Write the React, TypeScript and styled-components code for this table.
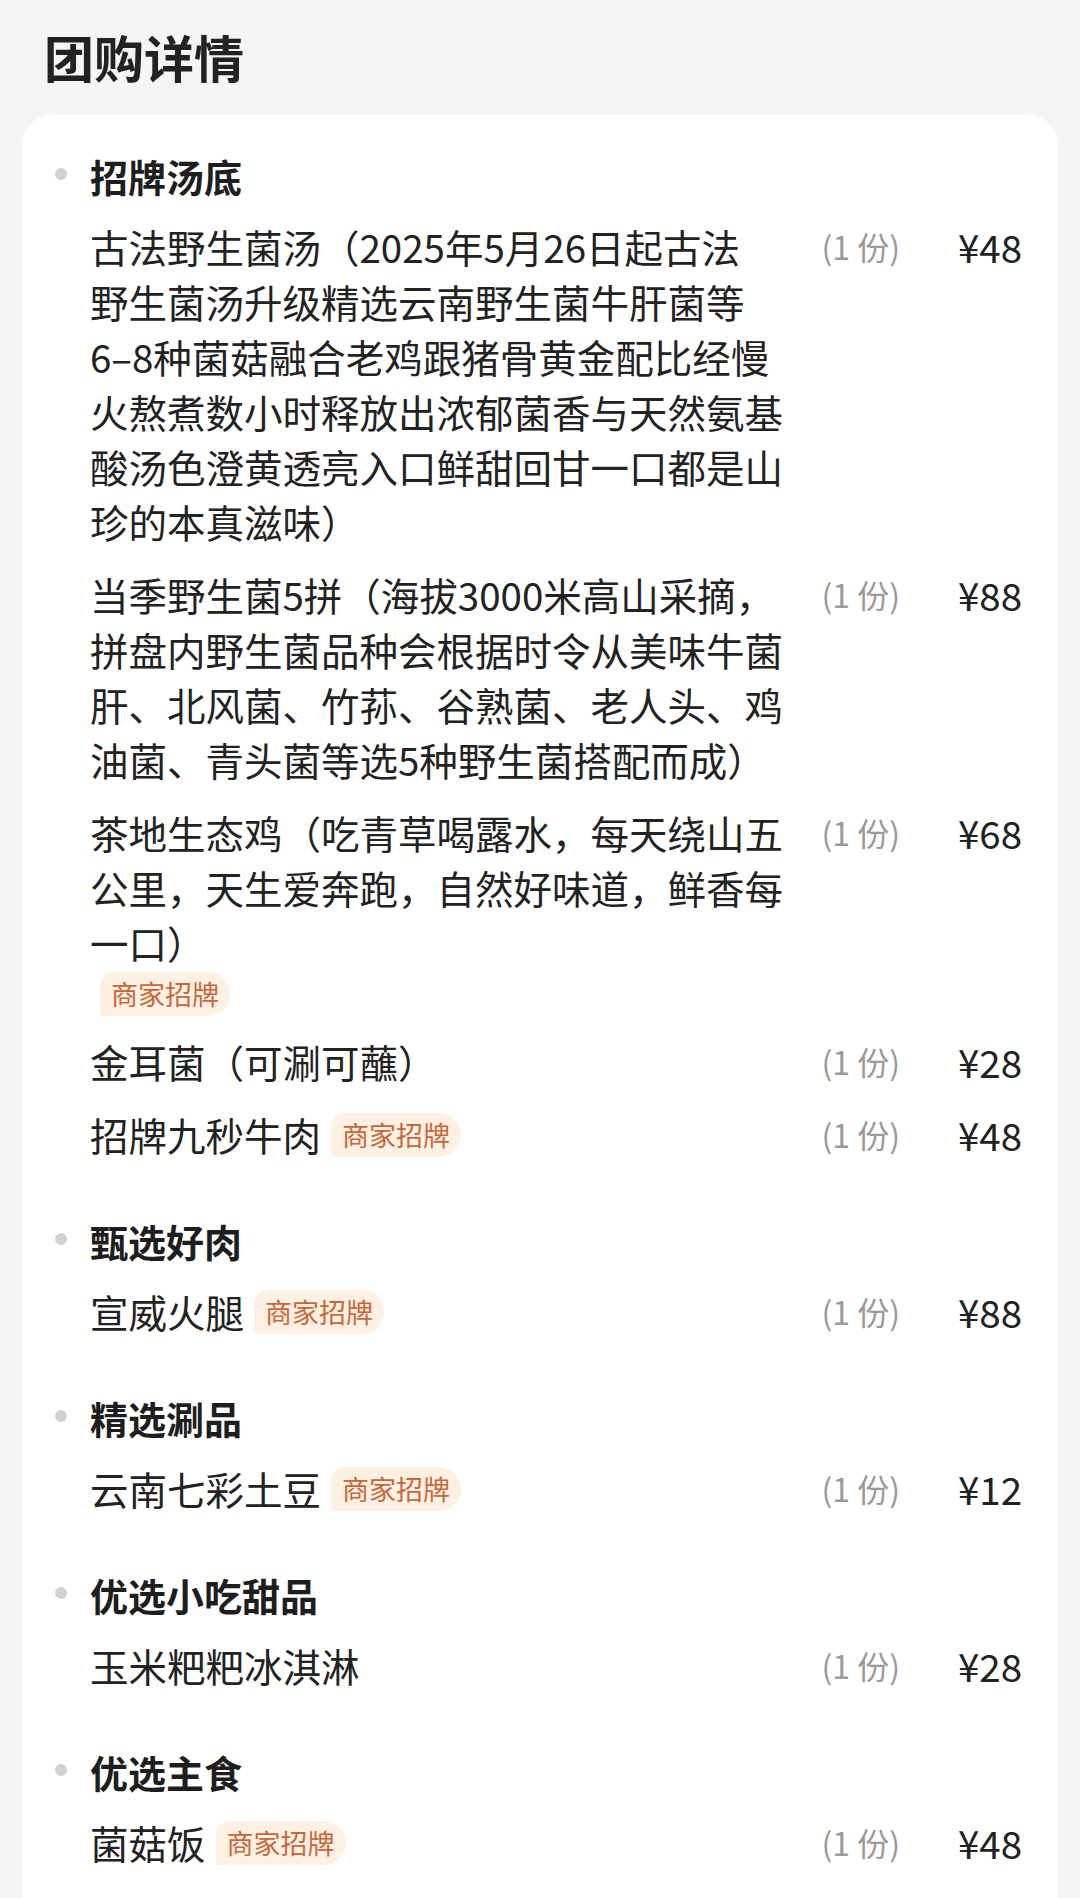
import React from "react";
import styled, { createGlobalStyle } from "styled-components";

const GlobalStyle = createGlobalStyle`
  html, body {
    margin: 0;
    padding: 0;
    background: #f5f5f5;
  }
  body {
    font-family: "Noto Sans CJK SC", "Noto Sans", sans-serif;
    color: #222;
    -webkit-font-smoothing: antialiased;
  }
  * { box-sizing: border-box; }
`;

const Page = styled.div`
  width: 1080px;
  min-height: 1898px;
  background: #f5f5f5;
  overflow: hidden;
`;

const Header = styled.h1`
  margin: 0;
  padding: 26px 0 0 44px;
  height: 115px;
  font-size: 50px;
  line-height: 60px;
  font-weight: 700;
  color: #222;
`;

const Card = styled.div`
  margin: 0 22px;
  background: #fff;
  border-radius: 30px 30px 0 0;
  padding: 36px 36px 80px 33px;
  display: flex;
  flex-direction: column;
  gap: 54px;
`;

const Section = styled.section`
  display: grid;
  grid-template-columns: 12px 1fr;
  column-gap: 23px;
`;

const Bullet = styled.span`
  width: 12px;
  height: 12px;
  margin-top: 17px;
  border-radius: 50%;
  background: #d2d2d2;
`;

const SectionBody = styled.div`
  display: flex;
  flex-direction: column;
  gap: 18px;
  min-width: 0;
`;

const SectionTitle = styled.h2`
  margin: 0;
  font-size: 38px;
  line-height: 50px;
  font-weight: 700;
  color: #1e1e1e;
`;

const ItemList = styled.div`
  display: flex;
  flex-direction: column;
  gap: 18px;
`;

const ItemRow = styled.div`
  display: grid;
  grid-template-columns: 1fr auto 122px;
  align-items: start;
`;

const NameCell = styled.div`
  display: flex;
  flex-wrap: wrap;
  align-items: center;
  row-gap: 2px;
  min-width: 0;
`;

const NameText = styled.div`
  font-size: 38.5px;
  line-height: 55px;
  color: #222;
`;

const Line = styled.span`
  display: block;
  white-space: nowrap;
`;

const Badge = styled.span`
  display: inline-block;
  margin-left: 10px;
  height: 44px;
  line-height: 44px;
  padding: 0 11px;
  font-size: 27px;
  color: #c8683a;
  background: #fff0e4;
  border-radius: 14px 22px 22px 3px;
  white-space: nowrap;
`;

const Qty = styled.span`
  font-size: 32px;
  line-height: 55px;
  color: #9a9a9a;
  white-space: nowrap;
`;

const Price = styled.span`
  font-size: 38.5px;
  line-height: 55px;
  color: #222;
  text-align: right;
  white-space: nowrap;
`;

type Item = { lines: string[]; price: string; badge?: boolean };
type Group = { title: string; items: Item[] };

const data: Group[] = [
  {
    title: "招牌汤底",
    items: [
      {
        lines: [
          "古法野生菌汤（2025年5月26日起古法",
          "野生菌汤升级精选云南野生菌牛肝菌等",
          "6–8种菌菇融合老鸡跟猪骨黄金配比经慢",
          "火熬煮数小时释放出浓郁菌香与天然氨基",
          "酸汤色澄黄透亮入口鲜甜回甘一口都是山",
          "珍的本真滋味）",
        ],
        price: "¥48",
      },
      {
        lines: [
          "当季野生菌5拼（海拔3000米高山采摘，",
          "拼盘内野生菌品种会根据时令从美味牛菌",
          "肝、北风菌、竹荪、谷熟菌、老人头、鸡",
          "油菌、青头菌等选5种野生菌搭配而成）",
        ],
        price: "¥88",
      },
      {
        lines: [
          "茶地生态鸡（吃青草喝露水，每天绕山五",
          "公里，天生爱奔跑，自然好味道，鲜香每",
          "一口）",
        ],
        price: "¥68",
        badge: true,
      },
      { lines: ["金耳菌（可涮可蘸）"], price: "¥28" },
      { lines: ["招牌九秒牛肉"], price: "¥48", badge: true },
    ],
  },
  { title: "甄选好肉", items: [{ lines: ["宣威火腿"], price: "¥88", badge: true }] },
  { title: "精选涮品", items: [{ lines: ["云南七彩土豆"], price: "¥12", badge: true }] },
  { title: "优选小吃甜品", items: [{ lines: ["玉米粑粑冰淇淋"], price: "¥28" }] },
  { title: "优选主食", items: [{ lines: ["菌菇饭"], price: "¥48", badge: true }] },
];

export default function App() {
  return (
    <Page>
      <GlobalStyle />
      <Header>团购详情</Header>
      <Card>
        {data.map((g) => (
          <Section key={g.title}>
            <Bullet />
            <SectionBody>
              <SectionTitle>{g.title}</SectionTitle>
              <ItemList>
                {g.items.map((it, i) => (
                  <ItemRow key={i}>
                    <NameCell>
                      <NameText>
                        {it.lines.map((l, j) => (
                          <Line key={j}>{l}</Line>
                        ))}
                      </NameText>
                      {it.badge && <Badge>商家招牌</Badge>}
                    </NameCell>
                    <Qty>(1 份)</Qty>
                    <Price>{it.price}</Price>
                  </ItemRow>
                ))}
              </ItemList>
            </SectionBody>
          </Section>
        ))}
      </Card>
    </Page>
  );
}
